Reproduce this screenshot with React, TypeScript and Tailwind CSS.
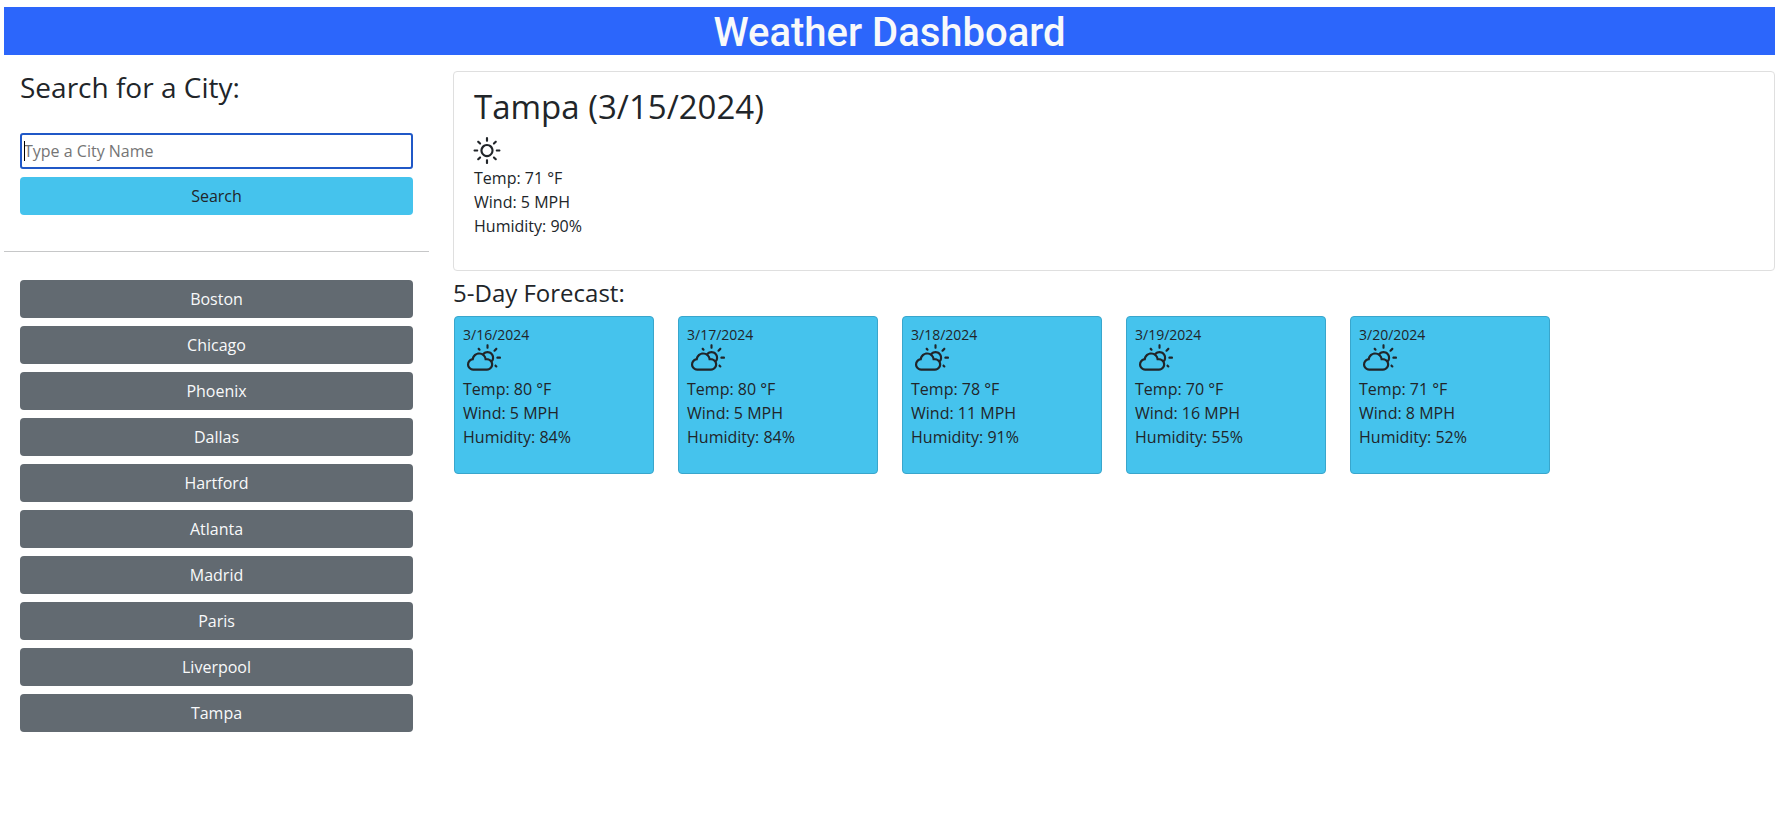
import { WiDayCloudy, WiDaySunny } from "react-icons/wi";

const cities = [
  "Boston",
  "Chicago",
  "Phoenix",
  "Dallas",
  "Hartford",
  "Atlanta",
  "Madrid",
  "Paris",
  "Liverpool",
  "Tampa",
];

const forecast = [
  { date: "3/16/2024", temp: 80, wind: 5, humidity: 84 },
  { date: "3/17/2024", temp: 80, wind: 5, humidity: 84 },
  { date: "3/18/2024", temp: 78, wind: 11, humidity: 91 },
  { date: "3/19/2024", temp: 70, wind: 16, humidity: 55 },
  { date: "3/20/2024", temp: 71, wind: 8, humidity: 52 },
];

type ReadingsProps = { temp: number; wind: number; humidity: number };

function Readings({ temp, wind, humidity }: ReadingsProps) {
  return (
    <div className="text-base leading-6">
      <p>Temp: {temp} °F</p>
      <p>Wind: {wind} MPH</p>
      <p>Humidity: {humidity}%</p>
    </div>
  );
}

export default function App() {
  return (
    <div className="min-h-screen bg-white px-1 pt-[7px] pr-[6px] font-['Open_Sans',sans-serif] font-[370] text-[#212529]">
      <header className="bg-[#2c66fb] pt-1 text-center">
        <h1 className="font-['Roboto',sans-serif] text-[40px] leading-[44px] font-medium text-[#f8f9fa]">
          Weather Dashboard
        </h1>
      </header>

      <div className="flex gap-6">
        <aside className="w-[24%] shrink-0">
          <form
            className="flex flex-col border-b border-[#c6c7c8] px-4 pt-4 pb-9"
            onSubmit={(e) => e.preventDefault()}
          >
            <label htmlFor="city" className="mb-[30px] text-[28px] leading-8">
              Search for a City:
            </label>
            <div className="relative mb-2">
              <input
                id="city"
                type="text"
                autoFocus
                placeholder="Type a City Name"
                className="peer block h-9 w-full rounded-[3px] border-2 border-[#2058c7] px-0.5 text-base caret-black outline-none placeholder:text-[#757575] placeholder-shown:caret-transparent"
              />
              <span
                aria-hidden="true"
                className="pointer-events-none absolute top-2 left-1 hidden h-5 w-px bg-black peer-focus:peer-placeholder-shown:block"
              />
            </div>
            <button type="submit" className="h-[38px] rounded bg-[#45c3ed] text-base">
              Search
            </button>
          </form>
          <nav className="flex flex-col gap-2 px-4 pt-7" aria-label="Recent cities">
            {cities.map((city) => (
              <button
                key={city}
                type="button"
                className="h-[38px] rounded bg-[#626a71] text-base text-[#f8f9fa]"
              >
                {city}
              </button>
            ))}
          </nav>
        </aside>

        <main className="min-w-0 flex-1 pt-4">
          <section className="min-h-[200px] rounded border border-[#dfdfdf] px-5 pt-4">
            <h2 className="text-[33px] leading-[38px]">Tampa (3/15/2024)</h2>
            <WiDaySunny className="mt-1.5 -mb-1 -ml-1.5 size-[38px]" />
            <Readings temp={71} wind={5} humidity={90} />
          </section>
          <h3 className="mt-2 mb-2 text-2xl leading-7">5-Day Forecast:</h3>
          <div className="flex flex-wrap gap-6 pt-px pl-px">
            {forecast.map((day) => (
              <article
                key={day.date}
                className="min-h-[158px] w-[200px] rounded border border-[#39a6cc] bg-[#45c3ed] px-2 pt-2"
              >
                <h4 className="text-sm leading-5">{day.date}</h4>
                <WiDayCloudy className="-mt-0.5 -mb-1 ml-0.5 size-[38px]" />
                <Readings temp={day.temp} wind={day.wind} humidity={day.humidity} />
              </article>
            ))}
          </div>
        </main>
      </div>
    </div>
  );
}
